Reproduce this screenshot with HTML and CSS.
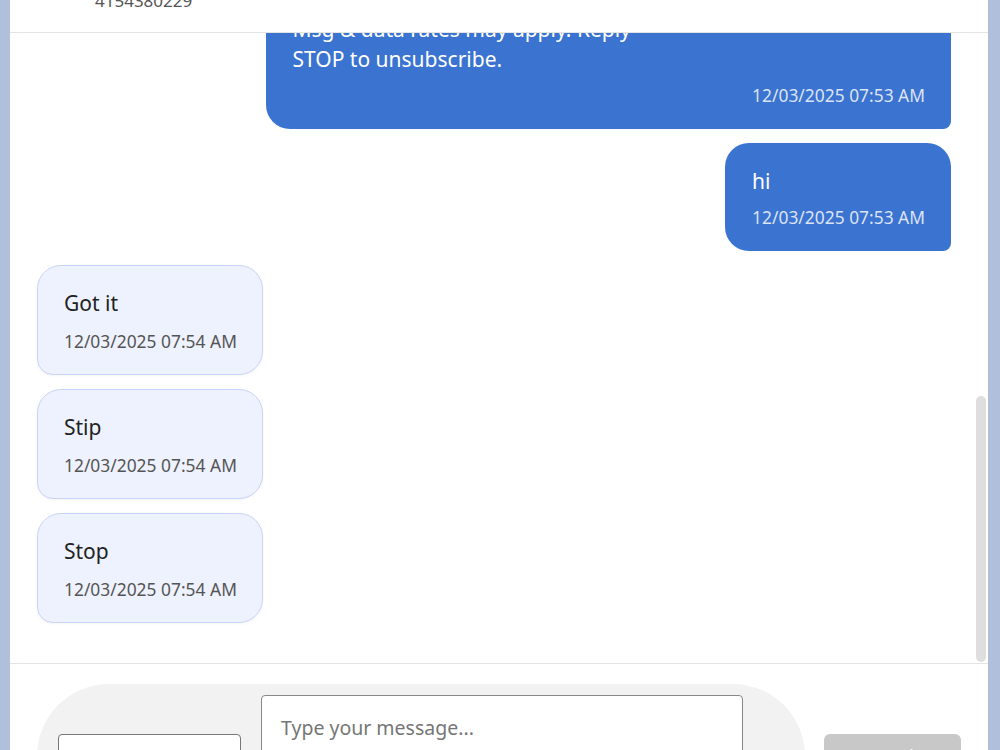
FILE: index.html
```html
<!DOCTYPE html>
<html lang="en">
<head>
  <meta charset="UTF-8">
  <meta name="viewport" content="width=device-width, initial-scale=1.0">
  <title>Conversation - 4154380229</title>
  <link rel="stylesheet" href="styles.css">
</head>
<body>
  <div class="chat-window">
    <header class="chat-header">
      <div class="contact">
        <div class="contact-name">Jordan Miles</div>
        <div class="contact-phone">4154380229</div>
      </div>
    </header>

    <div class="messages-wrap">
      <div class="messages">
        <div class="message-list">
          <div class="message incoming">
            <p class="message-text">Hello, is this the front desk?</p>
            <span class="message-time">12/03/2025 07:41 AM</span>
          </div>
          <div class="message outgoing">
            <p class="message-text">Yes it is! How can we help you today?</p>
            <span class="message-time">12/03/2025 07:44 AM</span>
          </div>
          <div class="message incoming">
            <p class="message-text">I want to get reminders by text for my next appointment</p>
            <span class="message-time">12/03/2025 07:47 AM</span>
          </div>
          <div class="message outgoing">
            <p class="message-text">Sure, we just added your number.</p>
            <span class="message-time">12/03/2025 07:50 AM</span>
          </div>
          <div class="message outgoing">
            <p class="message-text">Thanks for signing up for appointment reminders! You will get a text 24 hours before each visit.
Msg & data rates may apply. Reply
STOP to unsubscribe.</p>
            <span class="message-time">12/03/2025 07:53 AM</span>
          </div>
          <div class="message outgoing">
            <p class="message-text">hi</p>
            <span class="message-time">12/03/2025 07:53 AM</span>
          </div>
          <div class="message incoming">
            <p class="message-text">Got it</p>
            <span class="message-time">12/03/2025 07:54 AM</span>
          </div>
          <div class="message incoming">
            <p class="message-text">Stip</p>
            <span class="message-time">12/03/2025 07:54 AM</span>
          </div>
          <div class="message incoming">
            <p class="message-text">Stop</p>
            <span class="message-time">12/03/2025 07:54 AM</span>
          </div>
        </div>
      </div>
      <!-- list is kept scrolled to the newest message -->
      <div class="scroll-thumb"></div>
    </div>

    <footer class="composer">
      <div class="composer-box">
        <select class="template-select">
          <option>Templates</option>
        </select>
        <textarea class="message-input" placeholder="Type your message..."></textarea>
      </div>
      <button class="send-btn" disabled>Send</button>
    </footer>
  </div>
</body>
</html>
```

FILE: styles.css
```css
html, body {
  height: 100%;
}

body {
  font-family: 'Noto Sans', 'Liberation Sans', sans-serif;
  margin: 0;
  padding: 0 12px 0 10px;
  background: #b0c0dc;
  color: #222;
  overflow: hidden;
}

.chat-window {
  background: #fff;
  margin-top: -59px;
  display: flex;
  flex-direction: column;
}

/* header */
.chat-header {
  display: flex;
  align-items: flex-end;
  height: 92px;
  box-sizing: border-box;
  padding: 0 27px 19px 85px;
  border-bottom: 1px solid #e4e4e4;
}

.contact-name {
  font-size: 19px;
  font-weight: 600;
}

.contact-phone {
  font-size: 17px;
  color: #555;
  line-height: 25px;
}

/* messages */
.messages-wrap {
  position: relative;
}

.messages {
  height: 630px;
  overflow-y: auto;
  display: flex;
  flex-direction: column-reverse;
  scrollbar-width: none;
}

.scroll-thumb {
  position: absolute;
  right: 2px;
  bottom: 1px;
  width: 10px;
  height: 266px;
  border-radius: 5px;
  background: #dedede;
}

.message-list {
  display: flex;
  flex-direction: column;
  gap: 14px;
  padding: 14px 37px 40px 27px;
}

.message {
  max-width: 75%;
  box-sizing: border-box;
  padding: 23px 26px 22px 27px;
  border-radius: 24px;
}

.message.outgoing {
  align-self: flex-end;
  background: #3b73d0;
  color: #fff;
  border-bottom-right-radius: 8px;
}

.message.incoming {
  align-self: flex-start;
  background: #eef2fe;
  border: 1px solid #c9d5f7;
  padding: 22px 25px 21px 26px;
  border-bottom-left-radius: 16px;
  box-shadow: 0 1px 3px rgba(0, 0, 0, 0.05);
}

.message-text {
  margin: 0;
  font-size: 21px;
  line-height: 30px;
  white-space: pre-line;
}

.message-time {
  display: block;
  margin-top: 9px;
  font-size: 17.4px;
  line-height: 24px;
  color: #555;
  text-align: right;
}

.incoming .message-time {
  margin-top: 11px;
  text-align: left;
}

.outgoing .message-time {
  color: rgba(255, 255, 255, 0.82);
}

/* composer */
.composer {
  display: flex;
  align-items: center;
  gap: 19px;
  padding: 20px 27px;
  border-top: 1px solid #e4e4e4;
}

.composer-box {
  display: flex;
  align-items: center;
  gap: 20px;
  width: 768px;
  box-sizing: border-box;
  padding: 11px 62px 11px 21px;
  background: #f2f2f2;
  border-radius: 72px;
}

.template-select {
  width: 183px;
  height: 44px;
  border: 1px solid #777;
  border-radius: 4px;
  background: #fff;
  font-family: inherit;
  font-size: 17px;
  padding: 0 12px;
}

.message-input {
  flex: 1;
  height: 122px;
  box-sizing: border-box;
  padding: 18px 19px;
  border: 1px solid #888;
  border-radius: 4px;
  font-family: inherit;
  font-size: 19.5px;
  line-height: 28px;
  resize: none;
}

.message-input::placeholder {
  color: #767676;
}

.send-btn {
  width: 137px;
  height: 44px;
  border: none;
  border-radius: 6px;
  background: #c8c8c8;
  color: #fff;
  font-family: inherit;
  font-size: 18px;
}
```
